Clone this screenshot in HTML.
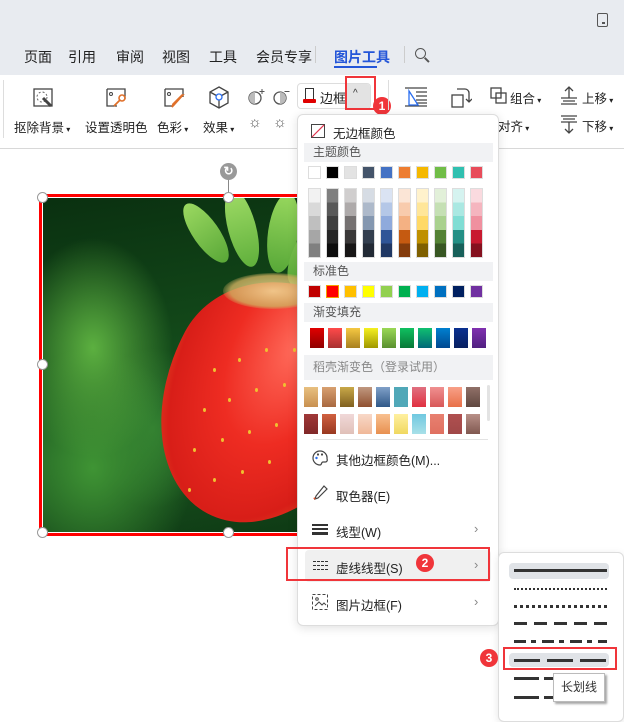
<!DOCTYPE html>
<html><head><meta charset="utf-8"><style>
*{margin:0;padding:0;box-sizing:border-box}
body{width:624px;height:719px;position:relative;overflow:hidden;background:#fff;font-family:"Liberation Sans","Noto Sans CJK SC",sans-serif;color:#222}
.a{position:absolute}
.t{position:absolute;font-size:13px;white-space:nowrap}
.s{position:absolute;width:13px;height:13px;border:1px solid #ddd}
.g{position:absolute;width:14px;height:20px}
.hd{position:absolute;left:304px;width:189px;background:#f1f2f4;font-size:12px;color:#555;padding-left:9px}
.mi{position:absolute;left:312px;font-size:12.5px;color:#222;white-space:nowrap}
.arr{position:absolute;left:474px;font-size:13px;color:#888}
.ln{position:absolute;left:514px;width:93px;height:0}
.badge{position:absolute;width:18px;height:18px;border-radius:50%;background:#f0353a;color:#fff;font-size:12px;font-weight:bold;text-align:center;line-height:18px}
.rb{position:absolute;border:2px solid #f0353a}
.h{position:absolute;width:11px;height:11px;border-radius:50%;background:#fff;border:1px solid #999}
.sd{position:absolute;width:3px;height:4px;border-radius:50%;background:#f0c030}
</style></head><body>
<!-- top bar -->
<div class="a" style="left:0;top:0;width:624px;height:75px;background:#e8ebf0"></div>
<div class="a" style="left:597px;top:13px;width:11px;height:14px;border:1.5px solid #555;border-radius:2px"></div>
<div class="a" style="left:602px;top:22px;width:3px;height:2px;background:#555"></div>
<div class="t" style="left:24px;top:47px;font-size:14px">页面</div>
<div class="t" style="left:68px;top:47px;font-size:14px">引用</div>
<div class="t" style="left:116px;top:47px;font-size:14px">审阅</div>
<div class="t" style="left:162px;top:47px;font-size:14px">视图</div>
<div class="t" style="left:209px;top:47px;font-size:14px">工具</div>
<div class="t" style="left:256px;top:47px;font-size:14px">会员专享</div>
<div class="a" style="left:315px;top:46px;width:1px;height:17px;background:#ccc"></div>
<div class="t" style="left:334px;top:47px;font-size:14px;color:#2456d8;font-weight:bold">图片工具</div>
<div class="a" style="left:334px;top:66px;width:43px;height:2px;background:#2456d8"></div>
<div class="a" style="left:404px;top:46px;width:1px;height:17px;background:#ccc"></div>
<div class="a" style="left:415px;top:48px;width:11px;height:11px;border:1.5px solid #555;border-radius:50%"></div>
<div class="a" style="left:424px;top:59px;width:6px;height:1.5px;background:#555;transform:rotate(45deg)"></div>
<!-- ribbon -->
<div class="a" style="left:0;top:75px;width:624px;height:74px;background:#fff;border-bottom:1px solid #d8d8d8"></div>
<div class="a" style="left:3px;top:80px;width:1px;height:58px;background:#ddd"></div>
<svg class="a" style="left:32px;top:87px" width="24" height="22"><rect x="2" y="2" width="18" height="17" fill="none" stroke="#444" stroke-width="1.3"/><circle cx="10" cy="10" r="5" fill="none" stroke="#666" stroke-dasharray="2 2"/><path d="M11 11l8 8" stroke="#444" stroke-width="3"/></svg>
<svg class="a" style="left:105px;top:87px" width="24" height="22"><path d="M2 2h18v10M2 2v17h10" fill="none" stroke="#444" stroke-width="1.3"/><circle cx="6" cy="7" r="1.5" fill="none" stroke="#444"/><circle cx="17" cy="11" r="3" fill="none" stroke="#e0702a" stroke-width="1.6"/><path d="M15 13l-6 6" stroke="#e0702a" stroke-width="1.8"/></svg>
<svg class="a" style="left:163px;top:87px" width="24" height="22"><path d="M2 2h18v8M2 2v17h8" fill="none" stroke="#444" stroke-width="1.3"/><circle cx="6" cy="7" r="1.5" fill="none" stroke="#444"/><path d="M20 8l-9 10 -2 2 1-3 9-9z" fill="none" stroke="#e0702a" stroke-width="1.6"/></svg>
<svg class="a" style="left:208px;top:86px" width="22" height="24"><path d="M11 1l9 5v11l-9 5-9-5V6z M2 6l9 5 9-5 M11 11v11" fill="none" stroke="#444" stroke-width="1.3"/><circle cx="11" cy="11" r="3" fill="#fff" stroke="#2a6ef0" stroke-width="1.3"/></svg>
<svg class="a" style="left:247px;top:88px" width="18" height="18"><circle cx="8" cy="10" r="6" fill="none" stroke="#555" stroke-width="1.3"/><path d="M8 4a6 6 0 0 0 0 12z" fill="#bbb"/><path d="M15 1v5M12.5 3.5h5" stroke="#555"/></svg>
<svg class="a" style="left:272px;top:88px" width="18" height="18"><circle cx="8" cy="10" r="6" fill="none" stroke="#555" stroke-width="1.3"/><path d="M8 4a6 6 0 0 1 0 12z" fill="#bbb"/><path d="M12.5 3.5h5" stroke="#555"/></svg>
<div class="t" style="left:14px;top:117px;font-size:12.5px">抠除背景<span style="font-size:8px"> ▾</span></div>
<div class="t" style="left:85px;top:117px;font-size:12.5px">设置透明色</div>
<div class="t" style="left:157px;top:117px;font-size:12.5px">色彩<span style="font-size:8px"> ▾</span></div>
<div class="t" style="left:203px;top:117px;font-size:12.5px">效果<span style="font-size:8px"> ▾</span></div>
<div class="t" style="left:248px;top:114px;font-size:15px;color:#555">☼</div>
<div class="t" style="left:273px;top:114px;font-size:15px;color:#555">☼</div>
<!-- 边框 button -->
<div class="a" style="left:297px;top:83px;width:74px;height:26px;border:1px solid #ddd;border-radius:4px;background:#fff"></div>
<div class="a" style="left:346px;top:84px;width:24px;height:24px;background:#e3e3e3;border-radius:0 3px 3px 0"></div>
<div class="t" style="left:353px;top:88px;font-size:10px;color:#333">^</div>
<div class="a" style="left:305px;top:88px;width:9px;height:11px;border:1.3px solid #333;border-bottom:none"></div>
<div class="a" style="left:303px;top:99px;width:13px;height:4px;background:#e00000;border-radius:1px"></div>
<div class="t" style="left:320px;top:88px;font-size:13px">边框</div>
<div class="rb" style="left:345px;top:76px;width:31px;height:34px"></div>
<div class="badge" style="left:373px;top:97px">1</div>
<div class="a" style="left:388px;top:80px;width:1px;height:30px;background:#ddd"></div>
<svg class="a" style="left:404px;top:86px" width="24" height="22"><path d="M1 2h22M1 20h22M12 6h11M12 10h11M12 14h11M12 17h11" stroke="#444" stroke-width="1.2"/><path d="M5 5v14h9z" fill="none" stroke="#2a6ef0" stroke-width="1.3"/></svg>
<svg class="a" style="left:450px;top:86px" width="22" height="24"><rect x="2" y="9" width="11" height="12" fill="none" stroke="#444" stroke-width="1.3"/><path d="M7 3h8a4 4 0 0 1 4 4v8M16 13l3 3 3-3" fill="none" stroke="#444" stroke-width="1.3"/></svg>
<svg class="a" style="left:490px;top:87px" width="18" height="18"><rect x="1" y="1" width="10" height="10" fill="none" stroke="#444" stroke-width="1.3"/><rect x="6" y="6" width="10" height="10" fill="none" stroke="#444" stroke-width="1.3"/></svg>
<div class="t" style="left:510px;top:88px;font-size:12.5px">组合<span style="font-size:8px"> ▾</span></div>
<svg class="a" style="left:560px;top:86px" width="18" height="20"><path d="M9 1v11M5 5l4-4 4 4M1 12h16M3 15h12M1 18h16" fill="none" stroke="#444" stroke-width="1.3"/></svg>
<div class="t" style="left:582px;top:88px;font-size:12.5px">上移<span style="font-size:8px"> ▾</span></div>
<div class="t" style="left:498px;top:116px;font-size:12.5px">对齐<span style="font-size:8px"> ▾</span></div>
<svg class="a" style="left:560px;top:114px" width="18" height="20"><path d="M1 2h16M3 5h12M1 8h16M9 8v11M5 15l4 4 4-4" fill="none" stroke="#444" stroke-width="1.3"/></svg>
<div class="t" style="left:582px;top:116px;font-size:12.5px">下移<span style="font-size:8px"> ▾</span></div>

<!-- image -->
<div class="a" style="left:228px;top:176px;width:1px;height:20px;background:#888"></div>
<div class="a" style="left:220px;top:163px;width:17px;height:17px;border-radius:50%;background:#999;color:#fff;font-size:12px;text-align:center;line-height:16px;font-weight:bold">↻</div>
<div class="a" style="left:39px;top:194px;width:270px;height:342px;border:3px solid #f00;border-right:none"></div>
<div class="a" style="left:43px;top:198px;width:266px;height:334px;overflow:hidden;background:radial-gradient(ellipse 80px 110px at 50px 150px,#5cb040,transparent),radial-gradient(ellipse 100px 120px at 50px 270px,#3f9434,transparent),radial-gradient(ellipse 60px 80px at 110px 230px,#2f7a30,transparent),linear-gradient(170deg,#0a3010,#134a1a 45%,#1a5420 70%,#0e3a14)">
 <div class="a" style="left:150px;top:0px;width:26px;height:70px;border-radius:50%;background:linear-gradient(#9ad860,#5aa838);transform:rotate(-35deg)"></div>
 <div class="a" style="left:185px;top:-10px;width:28px;height:80px;border-radius:50%;background:linear-gradient(#a0dc66,#60b03c);transform:rotate(-15deg)"></div>
 <div class="a" style="left:225px;top:-5px;width:30px;height:80px;border-radius:50%;background:linear-gradient(#98d85e,#58a838);transform:rotate(8deg)"></div>
 <div class="a" style="left:250px;top:20px;width:28px;height:70px;border-radius:50%;background:linear-gradient(#98d85e,#58a838);transform:rotate(25deg)"></div>
 <div class="a" style="left:118px;top:80px;width:210px;height:250px;border-radius:55% 45% 50% 50%/40% 40% 60% 60%;background:radial-gradient(ellipse at 50% 25%,#ff6a5a,#ee2c22 40%,#d81e18 70%,#e86a28 95%);transform:rotate(28deg)"></div>
 <div class="a" style="left:180px;top:75px;width:100px;height:36px;border-radius:50%;background:radial-gradient(#f0e8a0,#d0b060 60%,transparent 75%);opacity:.8"></div>
 <div class="sd" style="left:170px;top:170px"></div><div class="sd" style="left:195px;top:160px"></div><div class="sd" style="left:222px;top:150px"></div><div class="sd" style="left:250px;top:150px"></div>
 <div class="sd" style="left:160px;top:210px"></div><div class="sd" style="left:185px;top:200px"></div><div class="sd" style="left:212px;top:190px"></div><div class="sd" style="left:240px;top:185px"></div>
 <div class="sd" style="left:150px;top:250px"></div><div class="sd" style="left:178px;top:240px"></div><div class="sd" style="left:205px;top:232px"></div><div class="sd" style="left:232px;top:225px"></div><div class="sd" style="left:258px;top:215px"></div>
 <div class="sd" style="left:145px;top:290px"></div><div class="sd" style="left:170px;top:280px"></div><div class="sd" style="left:198px;top:272px"></div><div class="sd" style="left:225px;top:262px"></div>
</div>
<div class="h" style="left:37px;top:192px"></div>
<div class="h" style="left:223px;top:192px"></div>
<div class="h" style="left:37px;top:359px"></div>
<div class="h" style="left:37px;top:527px"></div>
<div class="h" style="left:223px;top:527px"></div>

<!-- dropdown -->
<div class="a" style="left:297px;top:114px;width:202px;height:512px;background:#fff;border:1px solid #ddd;border-radius:6px;box-shadow:0 2px 10px rgba(0,0,0,.12)"></div>
<svg class="a" style="left:311px;top:124px" width="14" height="14"><rect x=".5" y=".5" width="13" height="13" fill="none" stroke="#444"/><path d="M1 13L13 1" stroke="#e0304a" stroke-width="1.2"/></svg>
<div class="mi" style="left:333px;top:123px">无边框颜色</div>
<div class="hd" style="top:143px;height:19px;line-height:19px">主题颜色</div>
<div class="s" style="left:308px;top:166px;background:#fff"></div>
<div class="s" style="left:326px;top:166px;background:#000"></div>
<div class="s" style="left:344px;top:166px;background:#e3e3e3"></div>
<div class="s" style="left:362px;top:166px;background:#44546a"></div>
<div class="s" style="left:380px;top:166px;background:#4472c4"></div>
<div class="s" style="left:398px;top:166px;background:#ed7d31"></div>
<div class="s" style="left:416px;top:166px;background:#f5b800"></div>
<div class="s" style="left:434px;top:166px;background:#70bd47"></div>
<div class="s" style="left:452px;top:166px;background:#30c0b0"></div>
<div class="s" style="left:470px;top:166px;background:#e84c5a"></div>
<div class="a" style="left:308px;top:188px;width:13px;height:70px;background:linear-gradient(#f2f2f2 20%,#d9d9d9 20% 40%,#bfbfbf 40% 60%,#a6a6a6 60% 80%,#808080 80%);border:1px solid #ddd"></div>
<div class="a" style="left:326px;top:188px;width:13px;height:70px;background:linear-gradient(#7f7f7f 20%,#595959 20% 40%,#3f3f3f 40% 60%,#262626 60% 80%,#0d0d0d 80%);border:1px solid #ddd"></div>
<div class="a" style="left:344px;top:188px;width:13px;height:70px;background:linear-gradient(#d0cece 20%,#aeaaaa 20% 40%,#757171 40% 60%,#3a3838 60% 80%,#171616 80%);border:1px solid #ddd"></div>
<div class="a" style="left:362px;top:188px;width:13px;height:70px;background:linear-gradient(#d6dce4 20%,#adb9ca 20% 40%,#8497b0 40% 60%,#333f4f 60% 80%,#222a35 80%);border:1px solid #ddd"></div>
<div class="a" style="left:380px;top:188px;width:13px;height:70px;background:linear-gradient(#dae3f3 20%,#b4c7e7 20% 40%,#8faadc 40% 60%,#2f5597 60% 80%,#203864 80%);border:1px solid #ddd"></div>
<div class="a" style="left:398px;top:188px;width:13px;height:70px;background:linear-gradient(#fbe5d6 20%,#f8cbad 20% 40%,#f4b183 40% 60%,#c55a11 60% 80%,#843c0c 80%);border:1px solid #ddd"></div>
<div class="a" style="left:416px;top:188px;width:13px;height:70px;background:linear-gradient(#fff2cc 20%,#ffe699 20% 40%,#ffd966 40% 60%,#bf9000 60% 80%,#7f6000 80%);border:1px solid #ddd"></div>
<div class="a" style="left:434px;top:188px;width:13px;height:70px;background:linear-gradient(#e2f0d9 20%,#c5e0b4 20% 40%,#a9d18e 40% 60%,#548235 60% 80%,#385723 80%);border:1px solid #ddd"></div>
<div class="a" style="left:452px;top:188px;width:13px;height:70px;background:linear-gradient(#d5f3f0 20%,#aae8e2 20% 40%,#80ddd4 40% 60%,#248f85 60% 80%,#18605a 80%);border:1px solid #ddd"></div>
<div class="a" style="left:470px;top:188px;width:13px;height:70px;background:linear-gradient(#fadadf 20%,#f5b5bf 20% 40%,#f0909f 40% 60%,#c81a30 60% 80%,#85111f 80%);border:1px solid #ddd"></div>
<div class="hd" style="top:262px;height:19px;line-height:19px">标准色</div>
<div class="s" style="left:308px;top:285px;background:#c00000"></div>
<div class="s" style="left:326px;top:285px;background:#f00;border:1.5px solid #f5a000"></div>
<div class="s" style="left:344px;top:285px;background:#ffc000"></div>
<div class="s" style="left:362px;top:285px;background:#ff0"></div>
<div class="s" style="left:380px;top:285px;background:#92d050"></div>
<div class="s" style="left:398px;top:285px;background:#00b050"></div>
<div class="s" style="left:416px;top:285px;background:#00b0f0"></div>
<div class="s" style="left:434px;top:285px;background:#0070c0"></div>
<div class="s" style="left:452px;top:285px;background:#002060"></div>
<div class="s" style="left:470px;top:285px;background:#7030a0"></div>
<div class="hd" style="top:303px;height:19px;line-height:19px">渐变填充</div>
<div class="g" style="left:310px;top:328px;background:linear-gradient(#e00000,#900000)"></div>
<div class="g" style="left:328px;top:328px;background:linear-gradient(#ff4a4a,#a83030)"></div>
<div class="g" style="left:346px;top:328px;background:linear-gradient(#f5c842,#a88020)"></div>
<div class="g" style="left:364px;top:328px;background:linear-gradient(#f5f020,#a09800)"></div>
<div class="g" style="left:382px;top:328px;background:linear-gradient(#9ad855,#5a9030)"></div>
<div class="g" style="left:400px;top:328px;background:linear-gradient(#10c060,#087838)"></div>
<div class="g" style="left:418px;top:328px;background:linear-gradient(#10c070,#006878)"></div>
<div class="g" style="left:436px;top:328px;background:linear-gradient(#0080d0,#004890)"></div>
<div class="g" style="left:454px;top:328px;background:linear-gradient(#0a3090,#082060)"></div>
<div class="g" style="left:472px;top:328px;background:linear-gradient(#8030b0,#502080)"></div>
<div class="hd" style="top:355px;height:25px;line-height:25px;color:#888">稻壳渐变色（登录试用）</div>
<div class="g" style="left:304px;top:387px;background:linear-gradient(#e8c080,#c89050)"></div>
<div class="g" style="left:322px;top:387px;background:linear-gradient(#d8a070,#a86840)"></div>
<div class="g" style="left:340px;top:387px;background:linear-gradient(#c8a848,#806020)"></div>
<div class="g" style="left:358px;top:387px;background:linear-gradient(#c09880,#905030)"></div>
<div class="g" style="left:376px;top:387px;background:linear-gradient(#80a0c8,#305888)"></div>
<div class="g" style="left:394px;top:387px;background:linear-gradient(#50a8b8,#50a8b8)"></div>
<div class="g" style="left:412px;top:387px;background:linear-gradient(#e07080,#e03040)"></div>
<div class="g" style="left:430px;top:387px;background:linear-gradient(#f09090,#d85858)"></div>
<div class="g" style="left:448px;top:387px;background:linear-gradient(#f8a088,#e87048)"></div>
<div class="g" style="left:466px;top:387px;background:linear-gradient(#907068,#604840)"></div>
<div class="g" style="left:304px;top:414px;background:linear-gradient(#a03838,#802828)"></div>
<div class="g" style="left:322px;top:414px;background:linear-gradient(#d06040,#983820)"></div>
<div class="g" style="left:340px;top:414px;background:linear-gradient(#f0d8d8,#e0c0b8)"></div>
<div class="g" style="left:358px;top:414px;background:linear-gradient(#f8d8c8,#f0b898)"></div>
<div class="g" style="left:376px;top:414px;background:linear-gradient(#f8c090,#e89050)"></div>
<div class="g" style="left:394px;top:414px;background:linear-gradient(#fff0a0,#f0d860)"></div>
<div class="g" style="left:412px;top:414px;background:linear-gradient(#70c8e0,#a8e0e8)"></div>
<div class="g" style="left:430px;top:414px;background:linear-gradient(#e88070,#e07060)"></div>
<div class="g" style="left:448px;top:414px;background:linear-gradient(#b05050,#a04848)"></div>
<div class="g" style="left:466px;top:414px;background:linear-gradient(#b89088,#805850)"></div>
<div class="a" style="left:487px;top:385px;width:3px;height:36px;background:#e3e3e3;border-radius:2px"></div>
<div class="a" style="left:313px;top:439px;width:175px;height:1px;background:#e3e3e3"></div>
<svg class="a" style="left:312px;top:450px" width="16" height="16"><path d="M8 1a7 7 0 1 0 0 14c2 0 1-3 3-3h2a2 2 0 0 0 2-3A7 7 0 0 0 8 1z" fill="none" stroke="#444" stroke-width="1.2"/><circle cx="4.5" cy="8" r="1.2" fill="#2a6ef0"/><circle cx="6" cy="4.5" r="1.1" fill="#444"/><circle cx="10" cy="4.5" r="1.1" fill="#444"/></svg>
<div class="mi" style="left:336px;top:450px">其他边框颜色(M)...</div>
<svg class="a" style="left:312px;top:485px" width="16" height="16"><path d="M12 1l3 3-9 9-3 1 1-3z" fill="none" stroke="#444" stroke-width="1.2"/><path d="M2 14l1-1" stroke="#e0502a" stroke-width="2"/></svg>
<div class="mi" style="left:336px;top:486px">取色器(E)</div>
<div class="a" style="left:312px;top:524px;width:16px;height:2px;background:#333"></div>
<div class="a" style="left:312px;top:528px;width:16px;height:2px;background:#333"></div>
<div class="a" style="left:312px;top:532px;width:16px;height:3px;background:#333"></div>
<div class="mi" style="left:336px;top:522px">线型(W)</div>
<div class="arr" style="left:474px;top:521px">›</div>
<div class="a" style="left:305px;top:550px;width:186px;height:32px;background:#f0f0f0;border-radius:4px"></div>
<div class="a" style="left:313px;top:561px;width:15px;border-top:1px dashed #333"></div>
<div class="a" style="left:313px;top:565px;width:15px;border-top:1px dashed #333"></div>
<div class="a" style="left:313px;top:569px;width:15px;border-top:1px dashed #333"></div>
<div class="mi" style="left:336px;top:558px">虚线线型(S)</div>
<div class="arr" style="left:474px;top:557px">›</div>
<div class="rb" style="left:286px;top:547px;width:204px;height:34px"></div>
<div class="badge" style="left:416px;top:554px">2</div>
<svg class="a" style="left:312px;top:594px" width="16" height="16"><rect x=".5" y=".5" width="15" height="15" fill="none" stroke="#444" stroke-dasharray="3 2"/><path d="M3 12l4-4 3 3 2-2 2 2" fill="none" stroke="#444"/><circle cx="5" cy="5" r="1.3" fill="none" stroke="#444"/></svg>
<div class="mi" style="left:336px;top:595px">图片边框(F)</div>
<div class="arr" style="left:474px;top:594px">›</div>

<!-- submenu -->
<div class="a" style="left:498px;top:552px;width:126px;height:170px;background:#fff;border:1px solid #ddd;border-radius:6px;box-shadow:0 2px 8px rgba(0,0,0,.1)"></div>
<div class="a" style="left:509px;top:563px;width:100px;height:16px;background:#e0e3e7;border-radius:4px"></div>
<div class="ln" style="top:569px;border-top:3px solid #333"></div>
<div class="ln" style="top:588px;border-top:2px dotted #333"></div>
<div class="ln" style="top:605px;border-top:3px dotted #333"></div>
<div class="ln" style="top:622px;height:3px;background:repeating-linear-gradient(90deg,#333 0 13px,transparent 13px 20px)"></div>
<div class="ln" style="top:640px;height:3px;background:repeating-linear-gradient(90deg,#333 0 12px,transparent 12px 17px,#333 17px 22px,transparent 22px 28px)"></div>
<div class="a" style="left:509px;top:653px;width:100px;height:14px;background:#e0e3e7;border-radius:4px"></div>
<div class="ln" style="top:659px;height:3px;background:repeating-linear-gradient(90deg,#333 0 26px,transparent 26px 33px)"></div>
<div class="rb" style="left:503px;top:647px;width:114px;height:23px"></div>
<div class="badge" style="left:480px;top:649px">3</div>
<div class="a" style="left:514px;top:677px;width:25px;height:3px;background:#333"></div>
<div class="a" style="left:544px;top:677px;width:10px;height:3px;background:#333"></div>
<div class="a" style="left:514px;top:696px;width:25px;height:3px;background:#333"></div>
<div class="a" style="left:544px;top:696px;width:10px;height:3px;background:#333"></div>
<div class="a" style="left:553px;top:673px;width:52px;height:29px;background:#fff;border:1px solid #bbb;box-shadow:2px 2px 2px rgba(0,0,0,.35);font-size:12px;color:#333;text-align:center;line-height:27px">长划线</div>
</body></html>
